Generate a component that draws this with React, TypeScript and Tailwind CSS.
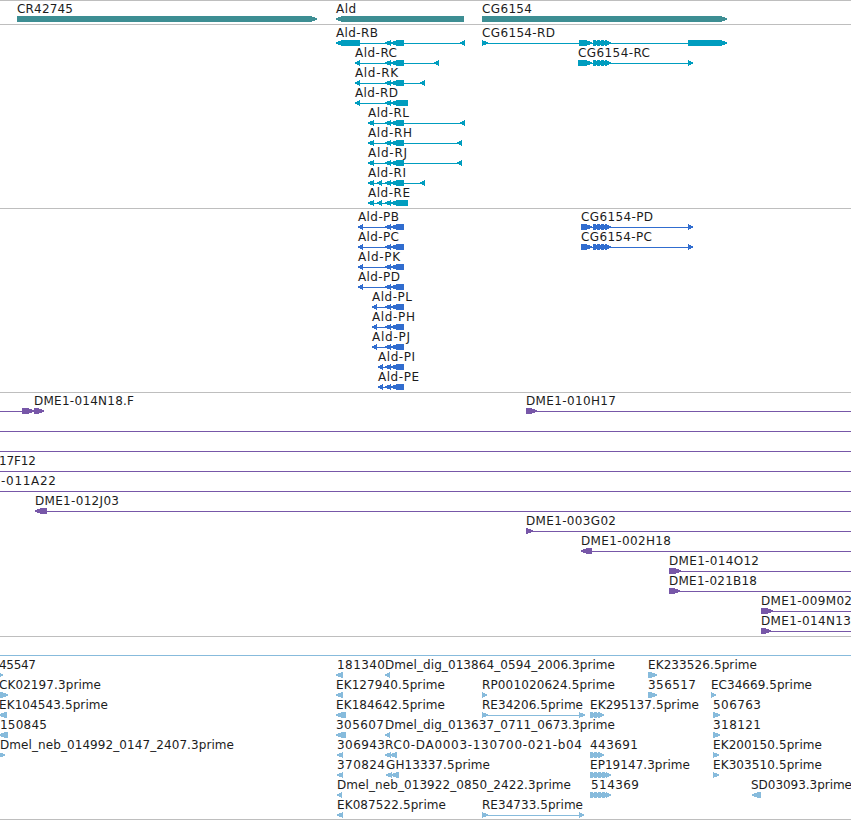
type Label = [text: string, x: number, width: number]
type Dir = "l" | "r"
type Block = [dir: Dir, from: number, to: number, tip?: number]

type Row = {
    labels?: Label[]
    blocks?: Block[]
    lines?: [number, number][]
}

const END = 851

const genes: Row[] = [
    {
        labels: [["CR42745", 17, 56], ["Ald", 336, 20], ["CG6154", 482, 50]],
        blocks: [["r", 17, 317], ["l", 336, 464], ["r", 482, 727]]
    }
]

const core: Block[] = [["l", 385, 391], ["l", 390, 404, 7]]
const coreLong: Block[] = [["l", 385, 391], ["l", 390, 408, 7]]
const smallExons: Block[] = [["r", 593, 598, 3], ["r", 597, 602, 3], ["r", 601, 606, 3], ["r", 605, 611, 5]]

const transcripts: Row[] = [
    {
        labels: [["Ald-RB", 336, 42], ["CG6154-RD", 482, 73]],
        blocks: [["l", 336, 360], ...core, ["l", 460, 465], ["r", 482, 488], ["r", 579, 592], ...smallExons, ["r", 688, 727]],
        lines: [[350, 464], [482, 700]]
    },
    {
        labels: [["Ald-RC", 355, 42], ["CG6154-RC", 578, 72]],
        blocks: [["l", 355, 360], ...core, ["l", 434, 439], ["r", 578, 592], ...smallExons, ["r", 688, 693]],
        lines: [[358, 438], [580, 692]]
    },
    { labels: [["Ald-RK", 355, 43]], blocks: [["l", 355, 360], ...core, ["l", 420, 425]], lines: [[358, 424]] },
    { labels: [["Ald-RD", 355, 43]], blocks: [["l", 355, 360], ...coreLong], lines: [[358, 404]] },
    { labels: [["Ald-RL", 368, 41]], blocks: [["l", 368, 374], ...core, ["l", 460, 465]], lines: [[370, 464]] },
    { labels: [["Ald-RH", 368, 44]], blocks: [["l", 368, 374], ...core, ["l", 457, 462]], lines: [[370, 461]] },
    { labels: [["Ald-RJ", 368, 39]], blocks: [["l", 368, 374], ...core, ["l", 457, 462]], lines: [[370, 461]] },
    { labels: [["Ald-RI", 368, 38]], blocks: [["l", 368, 374], ["l", 377, 382], ...core, ["l", 420, 425]], lines: [[370, 424]] },
    { labels: [["Ald-RE", 368, 42]], blocks: [["l", 368, 374], ["l", 377, 382], ...coreLong], lines: [[370, 404]] }
]

const proteins: Row[] = [
    {
        labels: [["Ald-PB", 358, 41], ["CG6154-PD", 581, 72]],
        blocks: [["l", 358, 363], ...core, ["r", 581, 592], ...smallExons, ["r", 688, 693]],
        lines: [[360, 400], [583, 692]]
    },
    {
        labels: [["Ald-PC", 358, 41], ["CG6154-PC", 581, 71]],
        blocks: [["l", 358, 363], ...core, ["r", 581, 592], ...smallExons, ["r", 688, 693]],
        lines: [[360, 400], [583, 692]]
    },
    { labels: [["Ald-PK", 358, 42]], blocks: [["l", 358, 363], ...core], lines: [[360, 400]] },
    { labels: [["Ald-PD", 358, 42]], blocks: [["l", 358, 363], ...core], lines: [[360, 400]] },
    { labels: [["Ald-PL", 372, 40]], blocks: [["l", 372, 377], ...core], lines: [[374, 400]] },
    { labels: [["Ald-PH", 372, 43]], blocks: [["l", 372, 377], ...core], lines: [[374, 400]] },
    { labels: [["Ald-PJ", 372, 38]], blocks: [["l", 372, 377], ...core], lines: [[374, 400]] },
    { labels: [["Ald-PI", 378, 37]], blocks: [["l", 378, 383], ...core], lines: [[380, 400]] },
    { labels: [["Ald-PE", 378, 41]], blocks: [["l", 378, 383], ...core], lines: [[380, 400]] }
]

const clones: Row[] = [
    {
        labels: [["DME1-014N18.F", 34, 100], ["DME1-010H17", 526, 90]],
        blocks: [["r", 22, 34], ["r", 34, 44], ["r", 526, 537]],
        lines: [[0, 40], [530, END]]
    },
    { lines: [[0, END]] },
    { lines: [[0, END]] },
    { labels: [["17F12", -1, 37]], lines: [[0, END]] },
    { labels: [["-011A22", 1, 55]], lines: [[0, END]] },
    { labels: [["DME1-012J03", 35, 84]], blocks: [["l", 35, 47]], lines: [[40, END]] },
    { labels: [["DME1-003G02", 526, 90]], blocks: [["r", 526, 533]], lines: [[528, END]] },
    { labels: [["DME1-002H18", 581, 90]], blocks: [["l", 581, 592]], lines: [[585, END]] },
    { labels: [["DME1-014O12", 669, 90]], blocks: [["r", 669, 681]], lines: [[672, END]] },
    { labels: [["DME1-021B18", 669, 88]], blocks: [["r", 669, 680]], lines: [[672, END]] },
    { labels: [["DME1-009M02", 761, 91]], blocks: [["r", 761, 773]], lines: [[765, END]] },
    { labels: [["DME1-014N13", 761, 90]], blocks: [["r", 761, 771]], lines: [[765, END]] }
]

const shortExons: Block[] = [["r", 590, 595, 3], ["r", 594, 599, 3], ["r", 598, 604, 5]]
const longExons: Block[] = [["r", 590, 595, 3], ["r", 594, 599, 3], ["r", 598, 603, 3], ["r", 602, 607, 3], ["r", 606, 611]]

const ests: Row[] = [
    {
        labels: [["45547", -1, 37], ["181340", 337, 48], ["Dmel_dig_013864_0594_2006.3prime", 385, 230], ["EK233526.5prime", 648, 109]],
        blocks: [["r", -2, 3], ["l", 336, 343], ["l", 385, 390], ["r", 648, 657]]
    },
    {
        labels: [["CK02197.3prime", -1, 102], ["EK127940.5prime", 336, 109], ["RP001020624.5prime", 482, 133], ["356517", 648, 48], ["EC34669.5prime", 711, 101]],
        blocks: [["r", -2, 8], ["l", 336, 343], ["r", 482, 487], ["r", 648, 657], ["r", 711, 716]]
    },
    {
        labels: [["EK104543.5prime", -1, 109], ["EK184642.5prime", 336, 109], ["RE34206.5prime", 482, 101], ["EK295137.5prime", 590, 109], ["506763", 713, 48]],
        blocks: [["l", -1, 7], ["l", 336, 346], ["r", 482, 488], ["r", 579, 585], ...shortExons, ["r", 713, 720]],
        lines: [[484, 583]]
    },
    {
        labels: [["150845", 0, 47], ["305607", 336, 48], ["Dmel_dig_013637_0711_0673.3prime", 385, 230], ["318121", 713, 48]],
        blocks: [["l", -1, 8], ["l", 336, 346], ["l", 385, 390], ["r", 713, 720]]
    },
    {
        labels: [["Dmel_neb_014992_0147_2407.3prime", 0, 234], ["306943", 337, 48], ["RC0-DA0003-130700-021-b04", 385, 197], ["443691", 590, 48], ["EK200150.5prime", 713, 109]],
        blocks: [["r", -1, 5], ["l", 337, 343], ["l", 385, 391], ["l", 390, 397], ...shortExons, ["r", 713, 719]]
    },
    {
        labels: [["370824", 337, 48], ["GH13337.5prime", 386, 104], ["EP19147.3prime", 590, 100], ["EK303510.5prime", 713, 109]],
        blocks: [["l", 337, 343], ["l", 386, 392], ["l", 391, 399], ...longExons, ["r", 713, 719]]
    },
    {
        labels: [["Dmel_neb_013922_0850_2422.3prime", 337, 234], ["514369", 591, 48], ["SD03093.3prime", 751, 101]],
        blocks: [["l", 337, 342], ...longExons, ["l", 752, 761]]
    },
    {
        labels: [["EK087522.5prime", 337, 109], ["RE34733.5prime", 482, 101]],
        blocks: [["l", 337, 343], ["r", 482, 488], ["r", 579, 584]],
        lines: [[484, 583]]
    }
]

// bar that tapers to a point on the strand side
function points([dir, from, to, tip = Math.min(6, to - from)]: Block) {
    if (dir === "r") {
        return `${from},14 ${to - tip},14 ${to},16.5 ${to},17.5 ${to - tip},20 ${from},20`
    }
    return `${to},14 ${from + tip},14 ${from},16.5 ${from},17.5 ${from + tip},20 ${to},20`
}

function TrackRow({ row }: { row: Row }) {
    return (
        <svg className="block h-5 w-full overflow-visible" shapeRendering="crispEdges">
            {row.lines?.map(([from, to]) => (
                <rect key={from} x={from} y={17} width={to - from} height={1} fill="currentColor" />
            ))}
            {row.blocks?.map((block) => (
                <polygon key={block[1]} points={points(block)} fill="currentColor" />
            ))}
            {row.labels?.map(([text, x, width]) => (
                <text key={text} x={x} y={11} textLength={width} className="fill-[#1c1c1c] text-xs">
                    {text}
                </text>
            ))}
        </svg>
    )
}

function Track({ rows, className }: { rows: Row[]; className: string }) {
    return (
        <section className={`border-t ${className}`}>
            {rows.map((row, i) => (
                <TrackRow key={i} row={row} />
            ))}
        </section>
    )
}

export default function App() {
    return (
        <main className="flex h-[820px] w-[851px] flex-col overflow-hidden bg-white font-['DejaVu_Sans',sans-serif]">
            <Track rows={genes} className="border-[#bebebe] pt-px pb-0.5 text-[#3d8e93]" />
            <Track rows={transcripts} className="border-[#bebebe] pt-px pb-0.5 text-[#009dbf]" />
            <Track rows={proteins} className="border-[#bebebe] pt-px pb-0.5 text-[#316dcf]" />
            <Track rows={clones} className="border-[#bebebe] pt-px pb-0.5 text-[#7757a8]" />
            <div className="h-[19px] border-t border-[#bebebe]" />
            <Track rows={ests} className="border-b border-t-[#87bbdc] border-b-[#bebebe] pt-0.5 pb-px text-[#87bbdc]" />
        </main>
    )
}
